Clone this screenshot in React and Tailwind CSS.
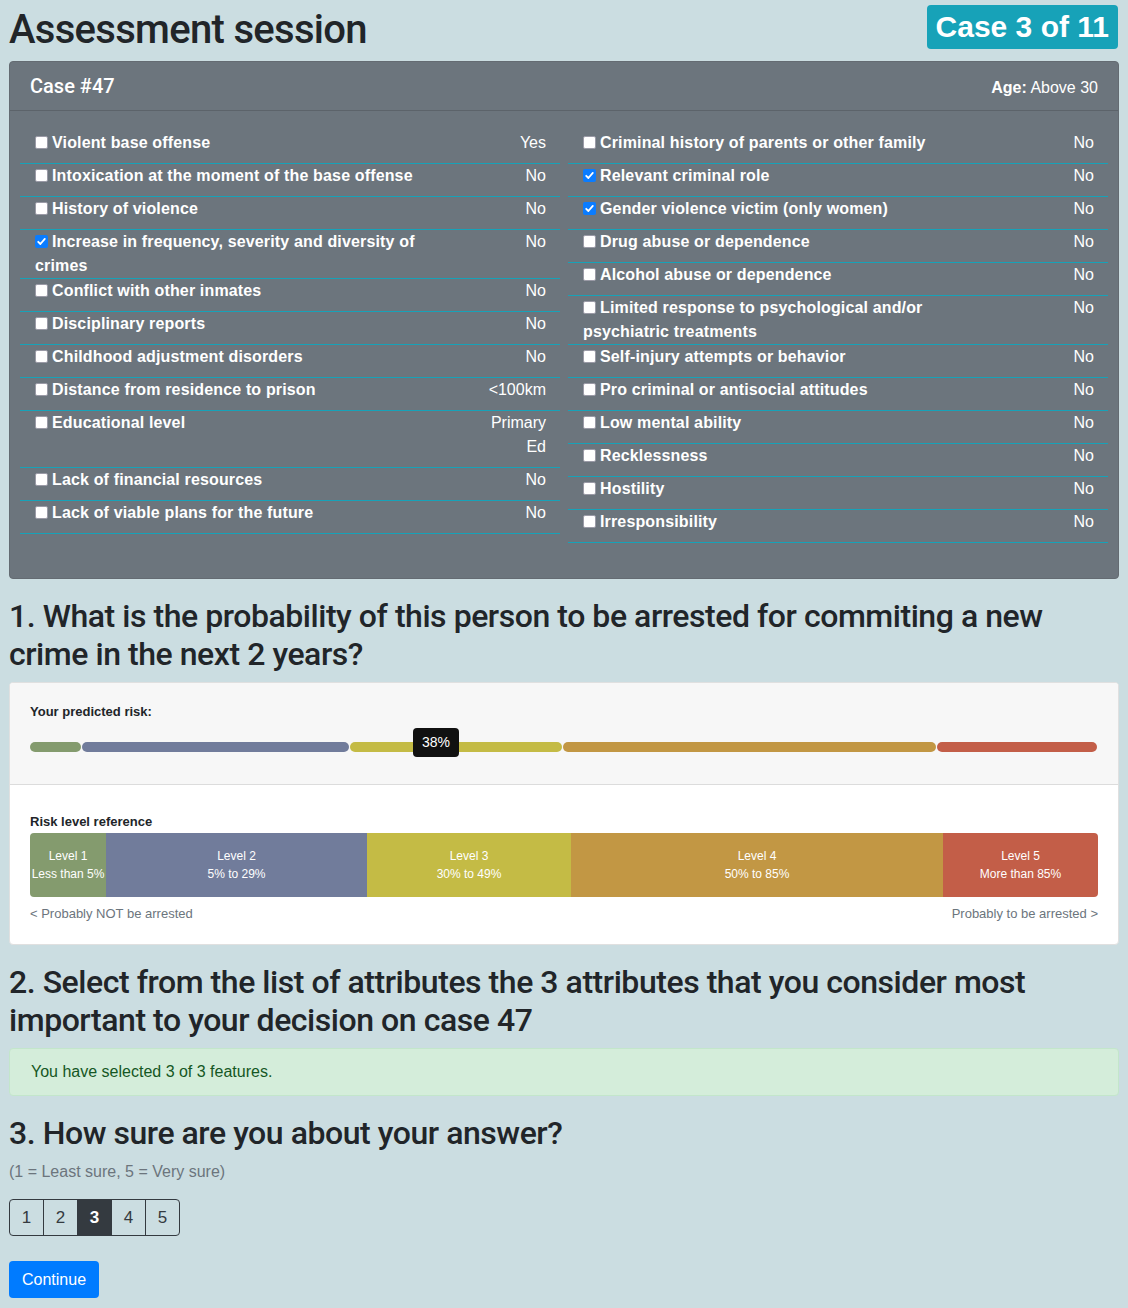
import React from "react";

const leftRows = [
  { label: ["Violent base offense"], value: ["Yes"] },
  { label: ["Intoxication at the moment of the base offense"], value: ["No"] },
  { label: ["History of violence"], value: ["No"] },
  { label: ["Increase in frequency, severity and diversity of", "crimes"], value: ["No"], checked: true },
  { label: ["Conflict with other inmates"], value: ["No"] },
  { label: ["Disciplinary reports"], value: ["No"] },
  { label: ["Childhood adjustment disorders"], value: ["No"] },
  { label: ["Distance from residence to prison"], value: ["<100km"] },
  { label: ["Educational level"], value: ["Primary", "Ed"] },
  { label: ["Lack of financial resources"], value: ["No"] },
  { label: ["Lack of viable plans for the future"], value: ["No"] },
];

const rightRows = [
  { label: ["Criminal history of parents or other family"], value: ["No"] },
  { label: ["Relevant criminal role"], value: ["No"], checked: true },
  { label: ["Gender violence victim (only women)"], value: ["No"], checked: true },
  { label: ["Drug abuse or dependence"], value: ["No"] },
  { label: ["Alcohol abuse or dependence"], value: ["No"] },
  { label: ["Limited response to psychological and/or", "psychiatric treatments"], value: ["No"] },
  { label: ["Self-injury attempts or behavior"], value: ["No"] },
  { label: ["Pro criminal or antisocial attitudes"], value: ["No"] },
  { label: ["Low mental ability"], value: ["No"] },
  { label: ["Recklessness"], value: ["No"] },
  { label: ["Hostility"], value: ["No"] },
  { label: ["Irresponsibility"], value: ["No"] },
];

function Check({ checked }) {
  if (checked) {
    return (
      <span className="inline-block relative top-[1px] w-[13px] h-[13px] mr-[4px] rounded-[2px] bg-[#0a7cff]">
        <svg className="absolute left-0 top-0" width="13" height="13" viewBox="0 0 13 13">
          <path d="M3.2 6.8 L5.4 9 L9.8 3.9" fill="none" stroke="white" strokeWidth="1.8" strokeLinecap="round" strokeLinejoin="round" />
        </svg>
      </span>
    );
  }
  return (
    <span className="inline-block relative top-[1px] w-[13px] h-[13px] mr-[4px] rounded-[2px] bg-white border border-[#9a9aa6]" />
  );
}

function Row({ row }) {
  return (
    <div className="flex items-start border-b border-[#17a2b8] pl-[15px] pr-[14px] leading-[24px] text-[16px] text-white">
      <div className="flex-1 font-bold whitespace-nowrap tracking-[0.15px]">
        <Check checked={row.checked} />
        {row.label.map((l, i) => (
          <React.Fragment key={i}>
            {i > 0 && <br />}
            {l}
          </React.Fragment>
        ))}
      </div>
      <div className="w-[70px] pb-[8px] text-right whitespace-nowrap">
        {row.value.map((v, i) => (
          <React.Fragment key={i}>
            {i > 0 && <br />}
            {v}
          </React.Fragment>
        ))}
      </div>
    </div>
  );
}

const barSegs = [
  { w: 52, c: "bg-[#849b6e]" },
  { w: 268, c: "bg-[#717c9b]" },
  { w: 213, c: "bg-[#c4bb45]" },
  { w: 374, c: "bg-[#c29744]" },
  { w: 161, c: "bg-[#c35e48]" },
];

const levels = [
  { w: 76, c: "bg-[#849b6e]", a: "Level 1", b: "Less than 5%" },
  { w: 261, c: "bg-[#717c9b]", a: "Level 2", b: "5% to 29%" },
  { w: 204, c: "bg-[#c4bb45]", a: "Level 3", b: "30% to 49%" },
  { w: 372, c: "bg-[#c29744]", a: "Level 4", b: "50% to 85%" },
  { w: 155, c: "bg-[#c35e48]", a: "Level 5", b: "More than 85%" },
];

const head = { fontFamily: 'Roboto, "Liberation Sans", Arial, sans-serif' };

export default function App() {
  return (
    <div
      className="min-h-[1308px] bg-[#cbdde1] px-[9px] pt-[5px] text-[#212529] overflow-hidden"
      style={{ fontFamily: '"Liberation Sans", Arial, sans-serif' }}
    >
      <div className="flex justify-between items-start h-[56px]">
        <h1 className="mt-[1px] text-[40px] leading-[48px] font-medium tracking-[-0.7px]" style={head}>
          Assessment session
        </h1>
        <div className="h-[44px] px-[9px] rounded-[4px] bg-[#17a2b8] text-white font-bold text-[30px] leading-[44px] mr-[1px]">
          Case 3 of 11
        </div>
      </div>

      <div className="bg-[#6c757d] border border-[#646b72] rounded-[4px]">
        <div className="flex justify-between items-center h-[49px] px-[20px] border-b border-[#5c636a] text-white">
          <div className="text-[20px] font-medium" style={head}>Case #47</div>
          <div className="text-[16px] pt-[3px]">
            <span className="font-bold">Age:</span> Above 30
          </div>
        </div>
        <div className="grid grid-cols-2 gap-x-[8px] px-[10px] pt-[20px] pb-[35px] items-start">
          <div className="flex flex-col">
            {leftRows.map((r, i) => (
              <Row key={i} row={r} />
            ))}
          </div>
          <div className="flex flex-col">
            {rightRows.map((r, i) => (
              <Row key={i} row={r} />
            ))}
          </div>
        </div>
      </div>

      <h2 className="mt-[18px] mb-[8px] text-[32px] leading-[38.4px] font-medium tracking-[-0.45px]" style={head}>
        1. What is the probability of this person to be arrested for commiting a new
        <br />
        crime in the next 2 years?
      </h2>

      <div className="bg-white border border-[#e0e0e0] rounded-[4px] overflow-hidden">
        <div className="bg-[#f7f7f7] border-b border-[#dcdcdc] px-[20px] pt-[20px] pb-[32px]">
          <div className="text-[13px] leading-[18px] font-bold">Your predicted risk:</div>
          <div className="relative mt-[21px] flex h-[10px] gap-[1px]">
            {barSegs.map((s, i) => (
              <div key={i} className={`${s.c} h-[10px] rounded-full`} style={{ width: s.w - 1 }} />
            ))}
            <div className="absolute left-[383px] top-[-14px] w-[46px] h-[29px] rounded-[4px] bg-[#111111] text-white text-[14px] leading-[29px] text-center">
              38%
            </div>
          </div>
        </div>
        <div className="px-[20px] pt-[28px] pb-[21px]">
          <div className="text-[13px] leading-[18px] font-bold">Risk level reference</div>
          <div className="mt-[2px] flex h-[64px] rounded-[4px] overflow-hidden">
            {levels.map((l, i) => (
              <div
                key={i}
                className={`${l.c} h-full flex flex-col items-center justify-center text-white text-[12px] leading-[18px] whitespace-nowrap`}
                style={{ width: l.w }}
              >
                <div>{l.a}</div>
                <div>{l.b}</div>
              </div>
            ))}
          </div>
          <div className="mt-[8px] flex justify-between text-[13px] leading-[18px] text-[#6c757d]">
            <span>&lt; Probably NOT be arrested</span>
            <span>Probably to be arrested &gt;</span>
          </div>
        </div>
      </div>

      <h2 className="mt-[18px] mb-[8px] text-[32px] leading-[38.4px] font-medium tracking-[-0.45px]" style={head}>
        2. Select from the list of attributes the 3 attributes that you consider most
        <br />
        important to your decision on case 47
      </h2>

      <div className="h-[48px] flex items-center px-[21px] bg-[#d4edda] border border-[#c3e6cb] rounded-[4px] text-[#155724] text-[16px]">
        You have selected 3 of 3 features.
      </div>

      <h2 className="mt-[18px] mb-[8px] text-[32px] leading-[38.4px] font-medium tracking-[-0.45px]" style={head}>
        3. How sure are you about your answer?
      </h2>
      <div className="text-[16px] leading-[24px] text-[#6c757d]">(1 = Least sure, 5 = Very sure)</div>

      <div className="mt-[15px] flex">
        {[1, 2, 3, 4, 5].map((n, i) => (
          <div
            key={n}
            className={`w-[35px] h-[37px] flex items-center justify-center border border-[#343a40] text-[17px] ${
              i > 0 ? "-ml-px" : ""
            } ${i === 0 ? "rounded-l-[4px]" : ""} ${i === 4 ? "rounded-r-[4px]" : ""} ${
              n === 3 ? "bg-[#343a40] text-white font-bold" : "text-[#343a40]"
            }`}
          >
            {n}
          </div>
        ))}
      </div>

      <div className="mt-[25px] inline-flex items-center h-[37px] px-[13px] rounded-[4px] bg-[#007bff] text-white text-[16px]">
        Continue
      </div>

      <div className="mt-[6px] text-center text-[13px] leading-[18px] text-[#6c757d]">
        If you have any questions about this study, please contact the research team.
      </div>
    </div>
  );
}
